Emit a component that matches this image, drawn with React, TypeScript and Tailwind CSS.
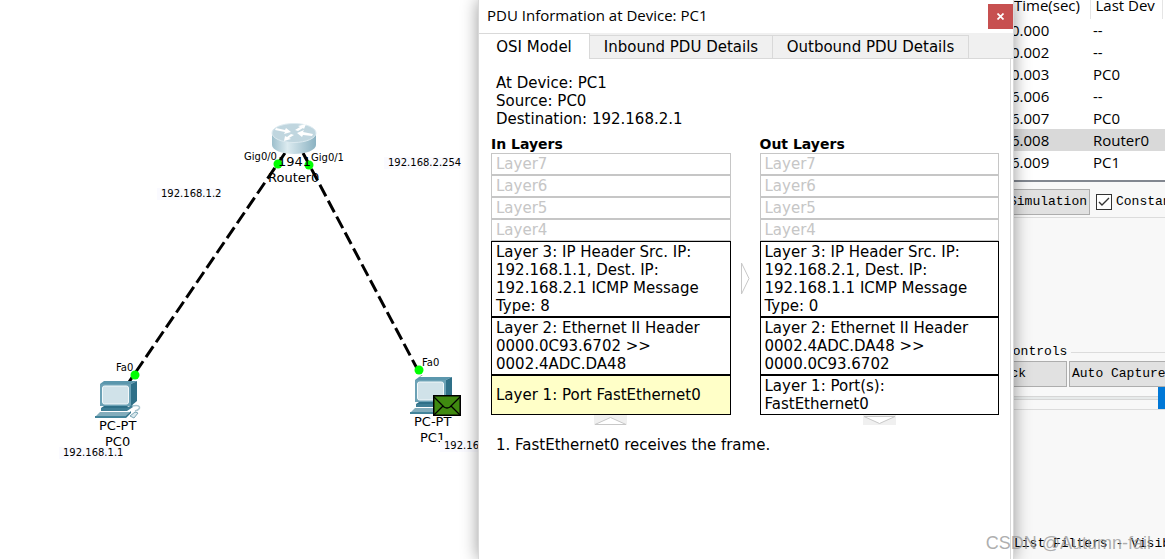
import { ReactNode } from 'react';

const UI_TEXT = "font-['DejaVu_Sans',sans-serif]";
const SYSTEM_TEXT = "font-['Open_Sans','Noto_Sans',sans-serif]";
const MONO_TEXT = "font-['Liberation_Mono',monospace]";

interface Layer {
  text: string;
  state: 'empty' | 'filled' | 'active';
  size: string;
}

const EMPTY_LAYERS: Layer[] = ['Layer7', 'Layer6', 'Layer5', 'Layer4'].map(text => ({ text, state: 'empty', size: 'h-[22px]' }));

const IN_LAYERS: Layer[] = [
  ...EMPTY_LAYERS,
  { text: 'Layer 3: IP Header Src. IP: 192.168.1.1, Dest. IP: 192.168.2.1 ICMP Message Type: 8', state: 'filled', size: 'min-h-[76px]' },
  { text: 'Layer 2: Ethernet II Header 0000.0C93.6702 >> 0002.4ADC.DA48', state: 'filled', size: 'min-h-[58px]' },
  { text: 'Layer 1: Port FastEthernet0', state: 'active', size: 'min-h-[40px]' },
];

const OUT_LAYERS: Layer[] = [
  ...EMPTY_LAYERS,
  { text: 'Layer 3: IP Header Src. IP: 192.168.2.1, Dest. IP: 192.168.1.1 ICMP Message Type: 0', state: 'filled', size: 'min-h-[76px]' },
  { text: 'Layer 2: Ethernet II Header 0002.4ADC.DA48 >> 0000.0C93.6702', state: 'filled', size: 'min-h-[58px]' },
  { text: 'Layer 1: Port(s): FastEthernet0', state: 'filled', size: 'min-h-[40px]' },
];

const LAYER_STYLES = {
  empty: 'border-[#c6c6c6] text-[#c6c6c6]',
  filled: 'border-black',
  active: 'border-black bg-[#ffffc8]',
};

const EVENTS = [
  { time: '0.000', device: '--' },
  { time: '0.002', device: '--' },
  { time: '0.003', device: 'PC0' },
  { time: '6.006', device: '--' },
  { time: '6.007', device: 'PC0' },
  { time: '6.008', device: 'Router0', selected: true },
  { time: '6.009', device: 'PC1' },
  { time: '6.010', device: 'Router0' },
];

function RouterIcon() {
  return (
    <svg width="46" height="33" viewBox="0 0 46 33" aria-hidden="true">
      <defs>
        <linearGradient id="router-side">
          <stop offset="0" stopColor="#9dbfcc" />
          <stop offset="0.35" stopColor="#dcebf0" />
          <stop offset="1" stopColor="#8bb2c2" />
        </linearGradient>
      </defs>
      <path d="M1 11v12c0 5 10 9 22 9s22-4 22-9V11z" fill="url(#router-side)" />
      <ellipse cx="23" cy="11" rx="22" ry="9.5" fill="#c0d6df" stroke="#dceaf0" />
      <g fill="#fff">
        <path d="M4 8l1-2 9 2 1-2 5 4-7 2 1-2z" />
        <path d="M42 12l-1 2-9-1-1 2-5-4 7-3-1 2z" />
        <path d="M24 8l5-3-2-1 8-2-2 5-1-1-5 3z" />
        <path d="M23 13l-5 3 2 1-7 2 1-5 2 1 4-3z" />
      </g>
    </svg>
  );
}

function ComputerIcon() {
  return (
    <svg width="46" height="40" viewBox="0 0 46 40" aria-hidden="true">
      <path d="M5 4l4-3h33l-6 3z" fill="#5b97ad" />
      <path d="M36 4l6-3v20l-6 5z" fill="#2f7088" />
      <path d="M5 4h31v22H5z" fill="#6ba1b5" />
      <rect x="7.500" y="6" width="26" height="18" rx="2" fill="#d0e2e9" stroke="#f2f8fa" />
      <path d="M9 26h23l4 2H6z" fill="#2f7088" />
      <path d="M6 28h26l6-4v3l-6 4H6z" fill="#3f7e95" />
      <path d="M5 32h30l-4 5H0z" fill="#83adbc" />
      <path d="M0 36h31v2H0z" fill="#43849a" />
      <path d="M31 36l5-5v2l-5 5z" fill="#2f7088" />
      <path d="M37 26c9-2 10 3 3 5" fill="none" stroke="#a8c4ce" strokeWidth="1.5" />
      <path d="M35 36l5-4 3 1-4 5z" fill="#d8e7ec" stroke="#7ba6b6" />
    </svg>
  );
}

function EnvelopeIcon() {
  return (
    <svg width="28" height="21" viewBox="0 0 28 21" aria-hidden="true">
      <rect x="0.75" y="0.75" width="26.5" height="19.5" fill="#3f8a10" stroke="#000" strokeWidth="1.5" />
      <path d="M1 2l10 10q3 2 6 0L27 2M1 20l9-9M27 20l-9-9" fill="none" stroke="#000" strokeWidth="1.3" />
    </svg>
  );
}

function Label({ place, children }: { place: string; children: ReactNode }) {
  return <span className={`absolute whitespace-nowrap ${place}`}>{children}</span>;
}

function Topology() {
  return (
    <main className={`relative flex-1 overflow-hidden bg-white text-[10px] leading-3 ${UI_TEXT}`}>
      <svg className="absolute top-0 left-0" width="479" height="559" aria-hidden="true">
        <g stroke="#000" strokeWidth="3" strokeDasharray="13 5">
          <path d="M285 153L129 382" />
          <path d="M303 153L421 376" />
        </g>
      </svg>
      <div className="absolute top-[122px] left-[271px]"><RouterIcon /></div>
      <div className="absolute top-[380px] left-[95px]"><ComputerIcon /></div>
      <div className="absolute top-[376px] left-[410px]"><ComputerIcon /></div>
      <svg className="absolute top-0 left-0" width="479" height="559" aria-hidden="true">
        <g fill="#0f0">
          <circle cx="278" cy="164" r="4.500" />
          <circle cx="309" cy="165" r="4.500" />
          <circle cx="135" cy="375" r="4.500" />
          <circle cx="419" cy="370" r="4.500" />
        </g>
      </svg>
      <div className="absolute top-[395px] left-[433px]"><EnvelopeIcon /></div>
      <Label place="top-[151px] left-[244px]">Gig0/0</Label>
      <Label place="top-[152px] left-[311px]">Gig0/1</Label>
      <Label place="top-[154px] left-[278px] text-[13px] leading-4">1941</Label>
      <Label place="top-[170px] left-[268px] text-[13px] leading-4">Router0</Label>
      <Label place="top-[188px] left-[157px] bg-[#fafaff] pl-1">192.168.1.2</Label>
      <Label place="top-[157px] left-[384px] bg-[#fafaff] pl-1">192.168.2.254</Label>
      <Label place="top-[362px] left-[116px]">Fa0</Label>
      <Label place="top-[357px] left-[422px]">Fa0</Label>
      <Label place="top-[418px] left-[99px] text-[13px] leading-4">PC-PT</Label>
      <Label place="top-[434px] left-[105px] text-[13px] leading-4">PC0</Label>
      <Label place="top-[447px] left-[59px] bg-[#fafaff] pl-1">192.168.1.1</Label>
      <Label place="top-[414px] left-[414px] text-[13px] leading-4">PC-PT</Label>
      <Label place="top-[430px] left-[420px] text-[13px] leading-4">PC1</Label>
      <Label place="top-[440px] left-[440px] bg-[#fafaff] pl-1">192.168.2.1</Label>
    </main>
  );
}

function SimulationPanel() {
  return (
    <aside className={`flex w-[205px] shrink-0 flex-col overflow-hidden bg-[#f8f8f8] text-[13px] whitespace-nowrap ${MONO_TEXT}`}>
      <div className="h-[182px] shrink-0 overflow-hidden border-b-2 border-[#828790] bg-white">
        <table className={`w-full table-fixed text-[15px] ${SYSTEM_TEXT}`}>
          <thead>
            <tr className="h-[19px] text-left align-top leading-[10px]">
              <th className="w-[130px] border-r border-[#e5e5e5] pl-[54px] font-normal">Time(sec)</th>
              <th className="w-[72px] border-r border-[#e5e5e5] pl-[5px] font-normal">Last Dev</th>
              <th />
            </tr>
          </thead>
          <tbody>
            {EVENTS.map(event => (
              <tr key={event.time} className={`h-[22px] leading-[22px] ${event.selected ? 'bg-[#d9d9d9]' : ''}`}>
                <td className="pl-[51px]">{event.time}</td>
                <td className="pl-[3px]">{event.device}</td>
                <td />
              </tr>
            ))}
          </tbody>
        </table>
      </div>
      <div className="flex h-9 shrink-0 items-center gap-1.5 border-b border-[#dcdcdc] pt-1">
        <button className="h-[26px] w-[130px] shrink-0 border border-[#adadad] bg-[#e1e1e1] pr-0.5 text-right">Reset Simulation</button>
        <label className="flex items-center gap-1">
          <input type="checkbox" defaultChecked className="size-4 shrink-0 appearance-none border border-[#333] bg-white" />
          <svg className="pointer-events-none -ml-5 size-4" viewBox="0 0 16 16" aria-hidden="true">
            <path d="M3 8l3 3 7-7" fill="none" stroke="#333" strokeWidth="1.4" />
          </svg>
          Constant Delay
        </label>
      </div>
      <fieldset className="mt-[125px] flex min-w-0 shrink-0 flex-col border-b border-[#dcdcdc]">
        <div className="flex h-[18px] items-center gap-1">
          <span className="pl-1.5">Play Controls</span>
          <span className="h-px flex-1 bg-[#dcdcdc]" />
        </div>
        <div className="flex gap-0.5">
          <button className="h-[26px] w-[107px] shrink-0 border border-[#adadad] bg-[#e1e1e1] pr-10 text-right">Back</button>
          <button className="h-[26px] w-[200px] shrink-0 border border-[#adadad] bg-[#e1e1e1] pl-0.5 text-left">Auto Capture / Play</button>
        </div>
        <input
          type="range"
          aria-label="Play speed"
          defaultValue="100"
          className="h-[22px] w-full appearance-none bg-transparent [&::-webkit-slider-runnable-track]:h-1 [&::-webkit-slider-runnable-track]:border-y [&::-webkit-slider-runnable-track]:border-[#d6d6d6] [&::-webkit-slider-runnable-track]:bg-[#e7eaea] [&::-webkit-slider-thumb]:-mt-2.5 [&::-webkit-slider-thumb]:h-[22px] [&::-webkit-slider-thumb]:w-[7px] [&::-webkit-slider-thumb]:appearance-none [&::-webkit-slider-thumb]:bg-[#0078d7]"
        />
      </fieldset>
      <p className="mt-auto pb-1.5 pl-[54px]">List Filters - Visible Events</p>
    </aside>
  );
}

function LayerStack({ title, layers, children }: { title: string; layers: Layer[]; children: ReactNode }) {
  return (
    <section className="flex flex-1 flex-col">
      <h2 className="text-[14px] leading-[17px] font-bold">{title}</h2>
      {layers.map(layer => (
        <div key={layer.text} className={`flex items-center border pr-3 pl-1 ${layer.size} ${LAYER_STYLES[layer.state]}`}>
          {layer.text}
        </div>
      ))}
      <div className="flex h-[11px] justify-center">{children}</div>
    </section>
  );
}

function PduDialog() {
  return (
    <section
      role="dialog"
      aria-labelledby="pdu-title"
      className={`absolute inset-y-0 left-[478px] flex w-[536px] flex-col border-x border-[#d9d9d9] bg-white text-[15px] leading-[18px] shadow-[0_0_16px_rgba(0,0,0,0.4)] ${UI_TEXT}`}
    >
      <header className="flex h-[33px] shrink-0 items-center justify-between pl-2">
        <h1 id="pdu-title" className={`pb-1 ${SYSTEM_TEXT}`}>PDU Information at Device: PC1</h1>
        <button aria-label="Close" className="flex size-[25px] items-center justify-center bg-[#c75050]">
          <svg width="7" height="7" viewBox="0 0 7 7" aria-hidden="true">
            <path d="M0.5 0.5l6 6M6.5 0.5l-6 6" stroke="#fff" strokeWidth="1.7" />
          </svg>
        </button>
      </header>
      <div role="tablist" className="flex h-[26px] shrink-0 items-end bg-[#f0f0f0]">
        <button role="tab" aria-selected="true" className="h-[26px] w-[111px] border-t border-r border-[#d9d9d9] bg-white">OSI Model</button>
        <button role="tab" aria-selected="false" className="h-6 w-[183px] border-y border-r border-[#d9d9d9]">Inbound PDU Details</button>
        <button role="tab" aria-selected="false" className="h-6 w-[196px] border-y border-r border-[#d9d9d9]">Outbound PDU Details</button>
        <span className="flex-1 self-stretch border-b border-[#d9d9d9]" />
      </div>
      <div role="tabpanel" className="mr-0.5 flex-1 border-r border-[#d9d9d9] pt-[15px] pr-[11px] pl-3">
        <div className="pl-[5px]">
          <p>At Device: PC1</p>
          <p>Source: PC0</p>
          <p>Destination: 192.168.2.1</p>
        </div>
        <div className="mt-2 flex">
          <LayerStack title="In Layers" layers={IN_LAYERS}>
            <svg width="33" height="10" viewBox="0 0 33 10" aria-hidden="true">
              <path d="M0 0h33v10H0z" fill="#f0f0f0" />
              <path d="M1 9.5l15.500-7 15.500 7z" fill="#fff" stroke="#c8c8c8" />
            </svg>
          </LayerStack>
          <div className="flex w-[29px] justify-center pt-[126px]">
            <svg width="9" height="33" viewBox="0 0 9 33" aria-hidden="true">
              <path d="M0.500 1l7.500 15.500L0.500 32z" fill="#fff" stroke="#c8c8c8" />
            </svg>
          </div>
          <LayerStack title="Out Layers" layers={OUT_LAYERS}>
            <svg width="33" height="10" viewBox="0 0 33 10" aria-hidden="true">
              <path d="M0 0h33v10H0z" fill="#f0f0f0" />
              <path d="M1 1.500l15.500 7 15.500-7z" fill="#fff" stroke="#c8c8c8" />
            </svg>
          </LayerStack>
        </div>
        <p className="mt-2.5 pl-[5px]">1. FastEthernet0 receives the frame.</p>
      </div>
    </section>
  );
}

export default function App() {
  return (
    <div className="relative flex h-screen overflow-hidden text-black">
      <Topology />
      <SimulationPanel />
      <PduDialog />
      <span className="absolute right-3.5 bottom-1 font-['Liberation_Sans',sans-serif] text-[18px] leading-6 text-[#999]/80">CSDN @Autumn-fail</span>
    </div>
  );
}
